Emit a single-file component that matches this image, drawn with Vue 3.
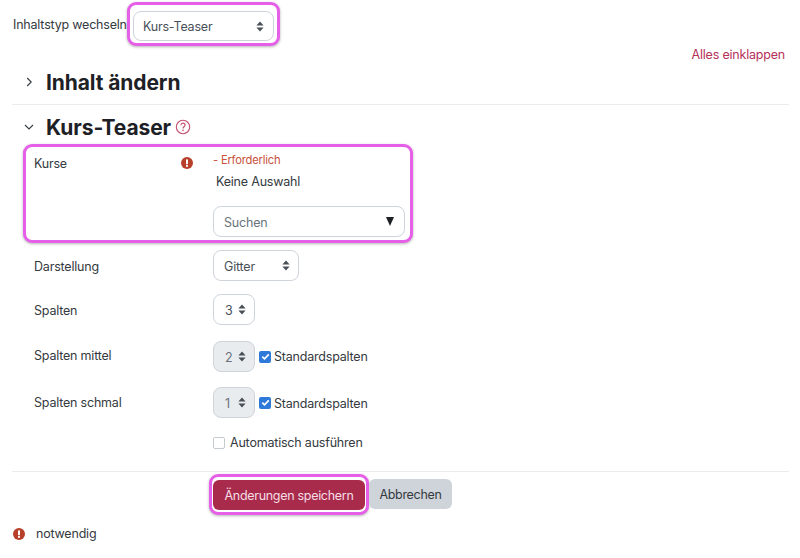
<script setup>
const rows = [
  { label: 'Darstellung', value: 'Gitter', cls: 'row-dar', sel: 'sel-wide' },
  { label: 'Spalten', value: '3', cls: 'row-sp', sel: 'sel-num' },
  { label: 'Spalten mittel', value: '2', cls: 'row-mit', sel: 'sel-num is-disabled', check: true },
  { label: 'Spalten schmal', value: '1', cls: 'row-sch', sel: 'sel-num is-disabled', check: true }
]
</script>

<template>
  <div class="page">
    <div class="type-row">
      <span class="type-label">Inhaltstyp wechseln</span>
      <div class="hl hl-type">
        <div class="sel sel-type">
          <span class="sel-text">Kurs-Teaser</span>
          <svg class="updown" width="8" height="11" viewBox="0 0 8 11"><path d="M4 0.5 7.6 4.4H.4zM4 10.5.4 6.6h7.2z" fill="#495057"/></svg>
        </div>
      </div>
    </div>

    <div class="collapse-row"><a class="collapse-link">Alles einklappen</a></div>

    <section class="head head-first">
      <svg class="chev" width="12" height="12" viewBox="0 0 12 12"><path d="M4.2 2 8.2 6 4.2 10" fill="none" stroke="#343a40" stroke-width="1.1"/></svg>
      <h3>Inhalt ändern</h3>
    </section>

    <section class="head head-second">
      <svg class="chev" width="12" height="12" viewBox="0 0 12 12"><path d="M2 4 6 8l4-4" fill="none" stroke="#343a40" stroke-width="1.1"/></svg>
      <h3>Kurs-Teaser</h3>
      <svg class="help" width="16" height="16" viewBox="0 0 16 16">
        <circle cx="8" cy="8" r="6.7" fill="none" stroke="#c4506f" stroke-width="1.1"/>
        <path d="M5.9 6.2C6 4.9 6.9 4.2 8 4.2c1.2 0 2.1.8 2.1 1.9 0 1.6-2.1 1.6-2.1 3.3" fill="none" stroke="#c4506f" stroke-width="1.2"/>
        <circle cx="8" cy="11.4" r=".8" fill="#c4506f"/>
      </svg>
    </section>

    <div class="hl hl-kurse">
      <div class="kurse-label">
        <span>Kurse</span>
        <svg class="err" width="12" height="12" viewBox="0 0 12 12"><circle cx="6" cy="6" r="6" fill="#b8402a"/><rect x="5" y="2.3" width="2" height="4.9" rx=".8" fill="#fff"/><circle cx="6" cy="8.9" r="1.05" fill="#fff"/></svg>
      </div>
      <div class="kurse-body">
        <div class="required">- Erforderlich</div>
        <div class="none">Keine Auswahl</div>
        <div class="sel sel-search">
          <span class="sel-text placeholder">Suchen</span>
          <span class="tri"></span>
        </div>
      </div>
    </div>

    <div v-for="r in rows" :key="r.label" class="row" :class="r.cls">
      <span class="row-label">{{ r.label }}</span>
      <div class="row-field">
        <div class="sel" :class="r.sel">
          <span class="sel-text">{{ r.value }}</span>
          <svg class="updown" width="8" height="11" viewBox="0 0 8 11"><path d="M4 0.5 7.6 4.4H.4zM4 10.5.4 6.6h7.2z" fill="#495057"/></svg>
        </div>
        <template v-if="r.check">
          <span class="cb cb-on">
            <svg width="11" height="11" viewBox="0 0 11 11"><path d="M2.3 5.7 4.5 7.9 8.8 3.3" fill="none" stroke="#fff" stroke-width="1.7"/></svg>
          </span>
          <span class="cb-text">Standardspalten</span>
        </template>
      </div>
    </div>

    <div class="auto-row">
      <span class="cb cb-off"></span>
      <span>Automatisch ausführen</span>
    </div>

    <div class="actions">
      <div class="hl hl-save"><button class="btn btn-save" type="button">Änderungen speichern</button></div>
      <button class="btn btn-cancel" type="button">Abbrechen</button>
    </div>

    <div class="legend">
      <svg width="12" height="12" viewBox="0 0 12 12"><circle cx="6" cy="6" r="6" fill="#b8402a"/><rect x="5" y="2.3" width="2" height="4.9" rx=".8" fill="#fff"/><circle cx="6" cy="8.9" r="1.05" fill="#fff"/></svg>
      <span>notwendig</span>
    </div>
  </div>
</template>

<style>
html, body { margin: 0; background: #fff; }
</style>

<style scoped>
.page {
  width: 800px;
  height: 558px;
  overflow: hidden;
  box-sizing: border-box;
  padding: 2px 11px 0 13px;
  font-family: Inter, "Liberation Sans", sans-serif;
  font-size: 12.5px;
  letter-spacing: -.2px;
  line-height: 18px;
  color: #343a40;
}
.hl {
  box-sizing: border-box;
  border: 3px solid #e65fe8;
  border-radius: 9px;
  box-shadow: 0 1px 3px rgba(0, 0, 0, .3);
  background: #fff;
}
.sel {
  box-sizing: border-box;
  height: 31px;
  display: flex;
  align-items: center;
  justify-content: space-between;
  border: 1px solid #ced4da;
  border-radius: 8px;
  background: #fff;
  color: #495057;
  padding: 0 9px 0 10px;
}
.sel-text { padding-top: 2px; }
.type-row { display: flex; align-items: center; }
.type-label { width: 114px; flex: none; white-space: nowrap; padding-top: 2px; }
.hl-type { width: 153px; height: 44px; padding: 6px 3px; flex: none; }
.sel-type { width: 141px; height: 30px; padding-left: 9px; }
.collapse-row { display: flex; justify-content: flex-end; height: 18px; padding-right: 4px; }
.collapse-link { color: #b5315a; }
.head {
  display: flex;
  align-items: center;
}
.head h3 {
  margin: 0;
  padding-top: 2px;
  font-size: 21px;
  letter-spacing: -.1px;
  line-height: 28px;
  font-weight: 700;
  color: #1d2125;
}
.head-first {
  height: 35px;
  padding-bottom: 5px;
  margin-left: -1px;
  border-bottom: 1px solid #e9ecef;
}
.chev { margin-left: 11px; width: 12px; margin-right: 11px; flex: none; }
.head-second { margin-top: 8px; height: 28px; margin-left: -1px; }
.help { margin-left: 4px; }
.hl-kurse {
  margin: 3px 0 0 10px;
  width: 390px;
  height: 99px;
  display: flex;
  padding: 0 5px 0 8px;
}
.kurse-label {
  flex: none;
  width: 158px;
  padding-top: 8px;
  display: flex;
  justify-content: space-between;
  align-items: flex-start;
  margin-right: 21px;
  box-sizing: border-box;
}
.err { margin-top: 2px; margin-right: -1px; }
.kurse-body { width: 192px; flex: none; }
.required { color: #c9503c; font-size: 11.2px; line-height: 16px; margin-top: 5px; }
.none { margin: 5px 0 0 3px; }
.sel-search { margin-top: 15px; padding: 0 10px; }
.placeholder { color: #6a737b; }
.tri {
  width: 0;
  height: 0;
  border-left: 4.5px solid transparent;
  border-right: 4.5px solid transparent;
  border-top: 9px solid #1d2125;
}
.row {
  display: flex;
  margin-left: 21px;
}
.row-label { width: 179px; padding-top: 8px; }
.row-field { display: flex; align-items: center; }
.row-dar { margin-top: 7px; }
.row-sp { margin-top: 13px; }
.row-mit { margin-top: 16px; }
.row-sch { margin-top: 15px; }
.row-mit .row-label { padding-top: 6px; }
.row-sch .row-label { padding-top: 7px; }
.sel-wide { width: 86px; padding-right: 8px; }
.sel-num { width: 42px; padding: 0 8px 0 11px; }
.is-disabled { background: #e9ecef; color: #6a737b; }
.cb {
  box-sizing: border-box;
  display: flex;
  align-items: center;
  justify-content: center;
  width: 12px;
  height: 12px;
  border-radius: 2px;
  flex: none;
}
.cb-on { background: #2f7ad9; margin-left: 4px; }
.cb-off { border: 1px solid #c5cad0; background: #fff; }
.cb-text { margin-left: 3px; }
.row-sch .cb-text { padding-top: 2px; }
.auto-row {
  display: flex;
  align-items: center;
  gap: 5px;
  margin: 16px 0 0 200px;
}
.actions {
  display: flex;
  align-items: flex-start;
  margin: 19px 0 0 -1px;
  padding: 2px 0 0 197px;
  border-top: 1px solid #e9ecef;
}
.hl-save { padding: 1px; width: 160px; height: 41px; flex: none; }
.btn {
  box-sizing: border-box;
  height: 30px;
  border: 0;
  border-radius: 6px;
  font: inherit;
  letter-spacing: -.3px;
  white-space: nowrap;
  padding: 2px 0 0;
}
.btn-save { width: 152px; background: #a82b4c; color: #f6dde4; margin-top: 2px; }
.btn-cancel { width: 83px; background: #ced4da; color: #343a40; margin-top: 5px; }
.legend {
  display: flex;
  align-items: center;
  gap: 11px;
  margin-top: 10px;
}
</style>
